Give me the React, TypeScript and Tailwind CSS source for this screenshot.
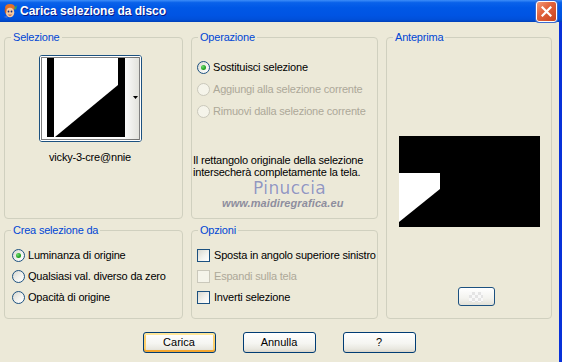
import React from "react";

function Radio({ checked, disabled }: { checked?: boolean; disabled?: boolean }) {
  return (
    <span
      className={
        "w-[13px] h-[13px] rounded-full border flex items-center justify-center shrink-0 " +
        (disabled
          ? "border-[#cac8bb] bg-[#f5f4ea]"
          : "border-[#1c5180] bg-[linear-gradient(135deg,#d8d8d0_0%,#f2f2ee_55%,#ffffff_100%)]")
      }
    >
      {checked && (
        <span className="w-[5px] h-[5px] rounded-full bg-[radial-gradient(circle_at_35%_35%,#6fdc6f_0%,#21a121_60%,#1a8a1a_100%)]" />
      )}
    </span>
  );
}

function Check({ disabled }: { disabled?: boolean }) {
  return (
    <span
      className={
        "w-[13px] h-[13px] border shrink-0 " +
        (disabled
          ? "border-[#cac8bb] bg-[#f5f4ea]"
          : "border-[#1c5180] bg-[linear-gradient(135deg,#d8d8d0_0%,#f2f2ee_55%,#ffffff_100%)]")
      }
    />
  );
}

function Group({
  title,
  className = "",
  children,
}: {
  title: string;
  className?: string;
  children?: React.ReactNode;
}) {
  return (
    <fieldset className={"border border-[#d0d0bf] rounded-[4px] p-0 m-0 min-w-0 " + className}>
      <legend className="ml-[6px] px-[2px] text-[#0046d5] leading-[13px]">{title}</legend>
      {children}
    </fieldset>
  );
}

function XPButton({ label, isDefault }: { label: string; isDefault?: boolean }) {
  return (
    <button
      className={
        "w-[73px] h-[21px] rounded-[3px] border border-[#003c74] bg-[linear-gradient(180deg,#ffffff_0%,#f5f5f1_55%,#e8e7df_85%,#d8d3c8_100%)] text-black text-[11px] leading-[13px] flex items-center justify-center " +
        (isDefault
          ? "shadow-[inset_0_2px_0_#ffe79a,inset_0_-2px_0_#f2a630,inset_2px_0_0_#fbd06e,inset_-2px_0_0_#fbd06e]"
          : "")
      }
    >
      {label}
    </button>
  );
}

function TitleIcon() {
  return (
    <svg width="16" height="16" viewBox="0 0 16 16">
      <path d="M3 5 Q3 1 8 1 Q13 1 13 5 L12 7 Q8 4 4 7 Z" fill="#e0702a" />
      <ellipse cx="8" cy="9.5" rx="4.3" ry="4.8" fill="#f6c9a0" />
      <path d="M3 5 Q2 9 4 11 L4.5 7 Z" fill="#d2601e" />
      <circle cx="6.5" cy="8.5" r="0.9" fill="#1a2a7a" />
      <circle cx="9.5" cy="8.5" r="0.9" fill="#1a2a7a" />
      <path d="M6.5 11.8 Q8 12.8 9.5 11.8" stroke="#b03a2a" strokeWidth="0.9" fill="none" />
      <path d="M12 5 L15 2 L14 7 Z" fill="#3aa64a" />
      <path d="M1.5 14 L5 12.5 L5.5 15.5 Z" fill="#3a6ad8" />
    </svg>
  );
}

function CloseButton() {
  return (
    <div className="w-[21px] h-[21px] rounded-[3px] border border-white bg-[linear-gradient(135deg,#f39a78_0%,#e2643e_40%,#c8421c_100%)] flex items-center justify-center shadow-[0_0_0_1px_#3a6ad0]">
      <svg width="11" height="11" viewBox="0 0 11 11">
        <path d="M1.5 1.5 L9.5 9.5 M9.5 1.5 L1.5 9.5" stroke="white" strokeWidth="2.2" strokeLinecap="square" />
      </svg>
    </div>
  );
}

function Thumbnail() {
  return (
    <div className="w-[103px] h-[87px] rounded-[3px] border border-[#1c5180] bg-white overflow-hidden">
      <svg width="101" height="85" viewBox="0 0 101 85" className="block">
        <defs>
          <linearGradient id="gr" x1="0" x2="1" y1="0" y2="0">
            <stop offset="0" stopColor="#fafafa" />
            <stop offset="1" stopColor="#e2e2dc" />
          </linearGradient>
        </defs>
        <rect x="0" y="0" width="101" height="85" fill="white" />
        <rect x="85" y="1" width="14" height="83" fill="url(#gr)" />
        <rect x="7" y="2" width="78" height="79" fill="black" />
        <polygon points="14,2 78,2 78,29 15,81 14,81" fill="white" />
        <polygon points="93,40 98,40 95.5,43" fill="black" />
        <rect x="1.5" y="1.5" width="98" height="82" fill="none" stroke="black" strokeWidth="1" strokeDasharray="1 1" />
      </svg>
    </div>
  );
}

function Preview() {
  return (
    <svg width="141" height="91" viewBox="0 0 141 91" className="block">
      <rect x="0" y="0" width="141" height="91" fill="black" />
      <polygon points="0,37 41,37 41,53 0,86" fill="white" />
    </svg>
  );
}

export default function App() {
  return (
    <div className="w-[562px] h-[362px] bg-[#ece9d8] flex flex-col overflow-hidden relative font-['Liberation_Sans',Arial,sans-serif] text-[11px] tracking-[-0.2px] text-black">
      {/* Title bar */}
      <div className="h-[22px] shrink-0 flex items-center bg-[linear-gradient(180deg,#3d8ef8_0%,#0a62ea_12%,#0058e6_35%,#0054e3_70%,#0050da_88%,#0040b8_100%)]">
        <div className="ml-[2px] w-[16px] h-[16px]">
          <TitleIcon />
        </div>
        <span className="ml-[2px] text-white font-bold text-[12px] tracking-normal leading-[16px] [text-shadow:1px_1px_0_#0a1883]">
          Carica selezione da disco
        </span>
        <div className="ml-auto mr-[5px]">
          <CloseButton />
        </div>
      </div>

      {/* Body */}
      <div className="flex-1 flex border-r-[3px] border-[#0831d9]">
        <div className="flex-1 flex flex-col pl-[4px] pt-[9px]">
          <div className="grid grid-cols-[179px_187px_166px] grid-rows-[188px_95px] gap-x-[8px] gap-y-[5px]">
            <Group title="Selezione">
              <div className="flex flex-col items-center pr-[7px]">
                <div className="mt-[11px]">
                  <Thumbnail />
                </div>
                <div className="mt-[9px] leading-[13px]">vicky-3-cre@nnie</div>
              </div>
            </Group>

            <Group title="Operazione">
              <div className="flex flex-col gap-[9px] pl-[5px] mt-[17px]">
                <div className="flex items-center gap-[3px] leading-[13px]">
                  <Radio checked />
                  <span>Sostituisci selezione</span>
                </div>
                <div className="flex items-center gap-[3px] leading-[13px] text-[#aca899]">
                  <Radio disabled />
                  <span>Aggiungi alla selezione corrente</span>
                </div>
                <div className="flex items-center gap-[3px] leading-[13px] text-[#aca899]">
                  <Radio disabled />
                  <span>Rimuovi dalla selezione corrente</span>
                </div>
              </div>
              <div className="mt-[36px] pl-[1px] leading-[12px]">
                Il rettangolo originale della selezione
                <br />
                intersecherà completamente la tela.
              </div>
            </Group>

            <Group title="Anteprima" className="row-span-2">
              <div className="flex flex-col items-center">
                <div className="mt-[92px]">
                  <Preview />
                </div>
                <div className="mt-[60px] ml-[14px] w-[37px] h-[19px] rounded-[3px] border border-[#1c5180] bg-[linear-gradient(180deg,#ffffff_0%,#f3f3ef_60%,#e2e1d8_100%)] flex items-center justify-center">
                  <div className="w-[14px] h-[10px] bg-[repeating-conic-gradient(#e4e4e4_0%_25%,#f8f8f8_0%_50%)] bg-[length:6px_6px]" />
                </div>
              </div>
            </Group>

            <Group title="Crea selezione da">
              <div className="flex flex-col gap-[8px] pl-[7px] mt-[12px]">
                <div className="flex items-center gap-[3px] leading-[13px]">
                  <Radio checked />
                  <span>Luminanza di origine</span>
                </div>
                <div className="flex items-center gap-[3px] leading-[13px]">
                  <Radio />
                  <span>Qualsiasi val. diverso da zero</span>
                </div>
                <div className="flex items-center gap-[3px] leading-[13px]">
                  <Radio />
                  <span>Opacità di origine</span>
                </div>
              </div>
            </Group>

            <Group title="Opzioni">
              <div className="flex flex-col gap-[8px] pl-[5px] mt-[12px]">
                <div className="flex items-center gap-[4px] leading-[13px]">
                  <Check />
                  <span>Sposta in angolo superiore sinistro</span>
                </div>
                <div className="flex items-center gap-[4px] leading-[13px] text-[#aca899]">
                  <Check disabled />
                  <span>Espandi sulla tela</span>
                </div>
                <div className="flex items-center gap-[4px] leading-[13px]">
                  <Check />
                  <span>Inverti selezione</span>
                </div>
              </div>
            </Group>
          </div>

          <div className="flex justify-center gap-[27px] mt-[13px] pr-[5px] tracking-normal">
            <XPButton label="Carica" isDefault />
            <XPButton label="Annulla" />
            <XPButton label="?" />
          </div>
        </div>
      </div>

      {/* Watermark */}
      <div className="absolute left-[253px] top-[181px] text-[17px] leading-[14px] tracking-[0.4px] text-[#9397bd] font-['DejaVu_Sans',sans-serif] [text-shadow:0_0_1px_#ffffff]">
        Pinuccia
      </div>
      <div className="absolute left-[222px] top-[197px] text-[11px] leading-[12px] font-bold italic text-[#8e8e9e] tracking-[0.1px]">
        www.maidiregrafica.eu
      </div>
    </div>
  );
}
